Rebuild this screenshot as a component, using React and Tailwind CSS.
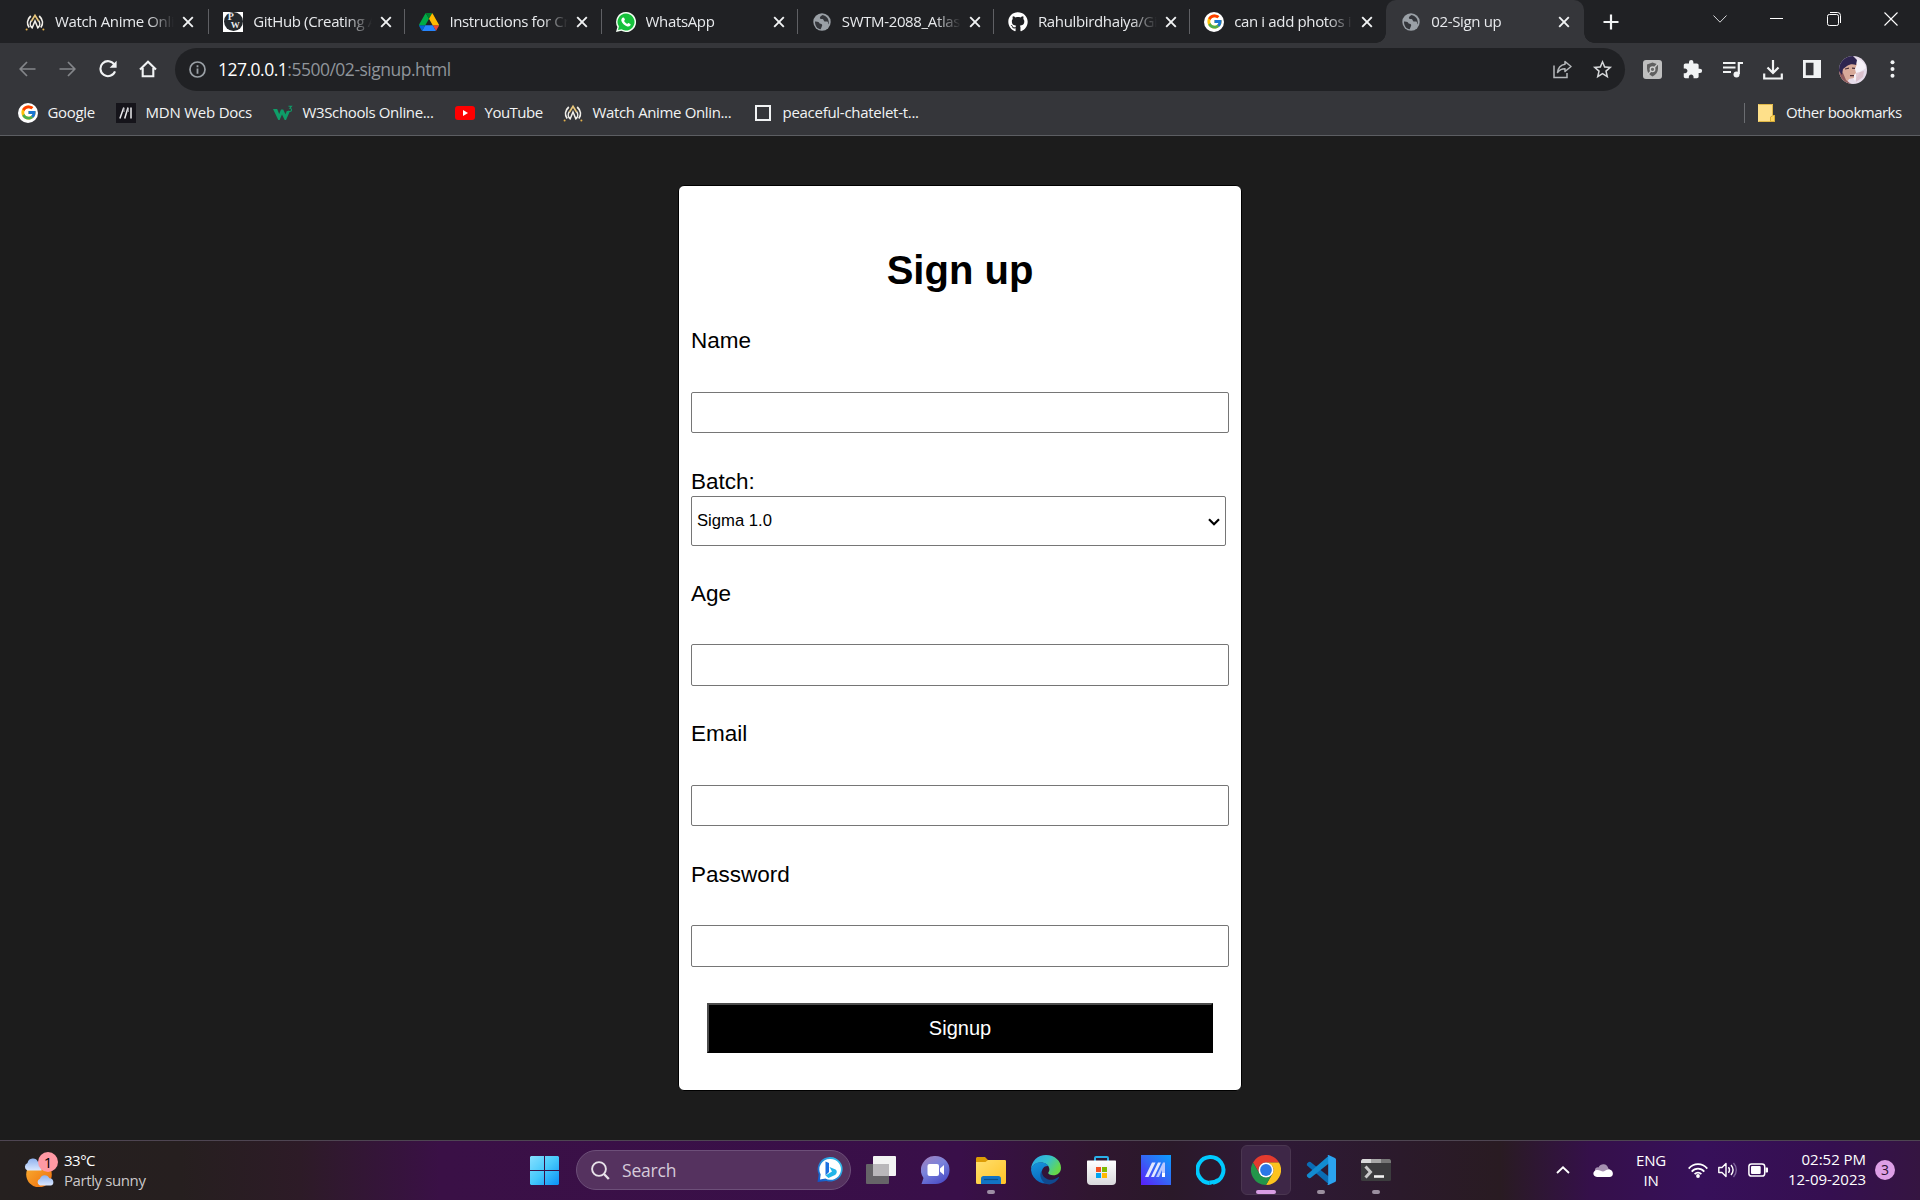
import React from "react";
import { FcGoogle } from "react-icons/fc";
import { FaGithub } from "react-icons/fa";
import { MdExtension, MdStarOutline } from "react-icons/md";

/* ---------- favicons ---------- */

function AnimeIcon() {
  return (
    <svg width="20" height="20" viewBox="0 0 20 20" fill="none">
      <path d="M4.200 15.500C1.600 12 2 7.500 5.800 4M15.800 15.500C18.400 12 18 7.500 14.200 4" stroke="#f1efe9" strokeWidth="1.700" />
      <path d="M6.500 8.500C4.500 11 5 14 7.200 15.800L10 9l2.800 6.800C15 14 15.500 11 13.500 8.500" stroke="#f1efe9" strokeWidth="1.500" />
      <path d="M6.500 9L10 3.300 13.500 9" stroke="#e8c77c" strokeWidth="1.700" />
      <circle cx="1.600" cy="17.600" r="1" fill="#e3b04b" />
      <circle cx="18.400" cy="17.600" r="1" fill="#e3b04b" />
    </svg>
  );
}

function PwIcon() {
  return (
    <span className="flex h-5 w-5 items-center justify-center bg-white">
      <span className="flex h-[19px] w-[19px] flex-col rounded-full bg-[#24292d] pt-px font-['Liberation_Serif',serif] font-bold text-[#e9ecec]">
        <span className="pl-[4px] text-[10px] leading-[8px]">P</span>
        <span className="pl-[7px] text-[9px] leading-[8px]">W</span>
      </span>
    </span>
  );
}

function DriveIcon() {
  return (
    <svg width="20" height="18" viewBox="0 0 87.300 78">
      <path fill="#0066da" d="m6.600 66.850 3.850 6.650c.8 1.400 1.950 2.500 3.300 3.300l13.750-23.800h-27.500c0 1.550.4 3.100 1.200 4.500z" />
      <path fill="#00ac47" d="m43.650 25-13.750-23.800c-1.350.8-2.500 1.900-3.300 3.300l-25.400 44a9.060 9.060 0 0 0 -1.200 4.500h27.500z" />
      <path fill="#ea4335" d="m73.550 76.800c1.350-.8 2.500-1.900 3.300-3.300l1.600-2.750 7.650-13.250c.8-1.400 1.200-2.950 1.200-4.500h-27.500l5.850 11.500z" />
      <path fill="#00832d" d="m43.650 25 13.750-23.800c-1.350-.8-2.900-1.200-4.500-1.200h-18.500c-1.600 0-3.150.45-4.500 1.200z" />
      <path fill="#2684fc" d="m59.800 53h-32.300l-13.750 23.800c1.350.8 2.900 1.200 4.500 1.200h50.800c1.600 0 3.150-.45 4.500-1.200z" />
      <path fill="#ffba00" d="m73.400 26.500-12.700-22c-.8-1.400-1.950-2.500-3.300-3.300l-13.750 23.800 16.150 28h27.450c0-1.550-.4-3.100-1.200-4.500z" />
    </svg>
  );
}

function WhatsIcon() {
  return (
    <svg width="20" height="20" viewBox="0 0 20 20">
      <path d="M10 0a10 10 0 1 1-4.700 18.800L0 20l1.400-5A10 10 0 0 1 10 0z" fill="#f4fff4" />
      <path d="M10 1.500a8.500 8.500 0 1 1-4.500 15.700L2 18l.9-3.400A8.500 8.500 0 0 1 10 1.500z" fill="#16c13c" />
      <path d="M7 5.500c.5-.3 1 0 1.200.5l.7 1.600c.1.500-.5 1-.8 1.400.8 1.500 1.900 2.400 3.200 3 .4-.4.8-1.100 1.200-1l1.800.9c.5.300.3 1 0 1.600-.6.900-1.900 1.200-3 .9-2.900-.8-5-2.900-5.900-5.400-.4-1.300.3-2.900 1.600-3.500z" fill="#fff" />
    </svg>
  );
}

function GlobeIcon() {
  return (
    <svg width="18" height="18" viewBox="0 0 18 18">
      <circle cx="9" cy="9" r="8.700" fill="#9aa0a6" />
      <path d="M2 8.500c2.800-.2 4.300.8 4.600 2 1.500.2 2.600.7 2.600 1.900l-1.500 3.900C4.500 16 1.800 13 2 8.500zM9.500 2c-1.500 1-3 2.200-2.600 3.300.4 1 1.700.6 2.700.8 1.200.3.8 1.700 1.900 2.300 1 .5 2.300-.4 3.100.3.700.7.200 2 1 2.800 1-4.500-1.500-8.800-6.100-9.500z" fill="#34363b" />
    </svg>
  );
}

function GoogleIcon() {
  return (
    <span className="flex h-5 w-5 items-center justify-center rounded-full bg-white">
      <FcGoogle size={17} />
    </span>
  );
}

function MdnIcon() {
  return (
    <svg width="20" height="20" viewBox="0 0 20 20" fill="none">
      <path fill="#15141a" d="M0 0h20v20H0z" />
      <path d="M4 15.500L7.500 5M8.200 15.500V5M8.500 15.500L12 5M12.300 15.500V5" stroke="none" />
      <path d="M3.900 15.500L7.800 4.500M8.700 15.500l3.300-11M15 15.500v-11" stroke="#e9e9ec" strokeWidth="1.500" />
      <path d="M8 5v4M12.300 5v4" stroke="#a9a9ae" strokeWidth="1" />
    </svg>
  );
}

function W3Icon() {
  return (
    <svg width="20" height="20" viewBox="0 0 20 20">
      <path d="M0 6h4.200l2 5L8 6.500h2.200l2.300 4.800 1.300-3.300h3.200L13 17h-1.300L9 11.500 6.600 17H5.300z" fill="#0f9d68" />
      <path d="M15.500 3.200h3l-1.600 2c2.300.2 2.200 3.300-.2 3.300-.7 0-1.200-.3-1.500-.7" fill="none" stroke="#0f9d68" strokeWidth="1.100" />
    </svg>
  );
}

function YoutubeIcon() {
  return (
    <svg width="20" height="14" viewBox="0 0 20 14">
      <rect width="20" height="14" rx="3" fill="#f00" />
      <path d="M8 4l5 3-5 3z" fill="#fff" />
    </svg>
  );
}

/* ---------- chrome ---------- */

function CloseX() {
  return (
    <svg width="12" height="12" viewBox="0 0 12 12" fill="none">
      <path d="M1.200 1.200l9.600 9.600M10.800 1.200L1.200 10.800" stroke="#f1f3f4" strokeWidth="1.900" />
    </svg>
  );
}

const tabs = [
  { icon: <AnimeIcon />, title: "Watch Anime Onli" },
  { icon: <PwIcon />, title: "GitHub (Creating A" },
  { icon: <DriveIcon />, title: "Instructions for Cr" },
  { icon: <WhatsIcon />, title: "WhatsApp" },
  { icon: <GlobeIcon />, title: "SWTM-2088_Atlas" },
  { icon: <FaGithub size={20} color="#fff" />, title: "Rahulbirdhaiya/Gi" },
  { icon: <GoogleIcon />, title: "can i add photos i" },
];

function TabTitle({ children }) {
  return (
    <span className="w-[119px] shrink-0 whitespace-nowrap text-[15px] tracking-[-0.35px] text-[#e8eaed] [mask-image:linear-gradient(to_right,black_78%,transparent_100%)]">
      {children}
    </span>
  );
}

function TabStrip() {
  return (
    <div className="flex h-[43px] bg-[#202124] pl-[13px]">
      {tabs.map((t, i) => (
        <div key={t.title} className={"flex w-[196.200px] shrink-0 items-center " + (i === 0 ? "pl-3" : "pl-[14px]")}>
          <span className="mr-[10px] flex w-5 shrink-0 justify-center">{t.icon}</span>
          <TabTitle>{t.title}</TabTitle>
          <span className="ml-[8px] flex w-3 shrink-0">
            <CloseX />
          </span>
          <span className={i === 6 ? "ml-auto w-px" : "ml-auto h-[25px] w-px bg-[#5f6064]"} />
        </div>
      ))}
      <div className="relative flex w-[198px] shrink-0 items-center rounded-t-[10px] bg-[#35363a] pl-[15px]">
        <span className="absolute -left-[10px] bottom-0 h-[10px] w-[10px] bg-[radial-gradient(circle_at_0_0,transparent_9.5px,#35363a_10px)]" />
        <span className="absolute -right-[10px] bottom-0 h-[10px] w-[10px] bg-[radial-gradient(circle_at_100%_0,transparent_9.5px,#35363a_10px)]" />
        <span className="mr-[10px] flex w-5 justify-center">
          <GlobeIcon />
        </span>
        <TabTitle>02-Sign up</TabTitle>
        <span className="ml-[8px]">
          <CloseX />
        </span>
      </div>
      <div className="flex w-[53px] items-center justify-center">
        <svg width="16" height="16" viewBox="0 0 16 16">
          <path d="M8 .5v15M.5 8h15" stroke="#f1f3f4" strokeWidth="2.200" />
        </svg>
      </div>
      <div className="mb-[6px] ml-auto flex w-[230px] items-center">
        <svg className="ml-[23px]" width="14" height="8" viewBox="0 0 14 8" fill="none">
          <path d="M.5.5L7 7.200 13.500.5" stroke="#d5d6d8" />
        </svg>
        <svg className="ml-[43px]" width="13" height="14" viewBox="0 0 13 14">
          <path d="M0 6.500h13" stroke="#fff" />
        </svg>
        <svg className="ml-11" width="14" height="14" viewBox="0 0 14 14" fill="none" stroke="#fff">
          <rect x=".5" y="2.500" width="11" height="11" rx="1.800" />
          <path d="M3 .5h7.500a3 3 0 0 1 3 3V11" />
        </svg>
        <svg className="ml-[43px]" width="14" height="14" viewBox="0 0 14 14">
          <path d="M.5.5l13 13M13.500.5l-13 13" stroke="#fff" strokeWidth="1.100" />
        </svg>
      </div>
    </div>
  );
}

function Avatar() {
  return (
    <svg width="28" height="28" viewBox="0 0 28 28">
      <defs>
        <clipPath id="avatar">
          <circle cx="14" cy="14" r="14" />
        </clipPath>
      </defs>
      <g clipPath="url(#avatar)">
        <path fill="#e6dcea" d="M0 0h28v28H0z" />
        <path fill="#f6f1f8" d="M17 3c5 0 9 4 10 9l-6 4-5 9-3-4z" />
        <path fill="#d0a6b0" d="M17 17l8-2-1 6-7 5z" opacity=".5" />
        <path fill="#d8aa9a" d="M1 11c4-5 12-6 17-3l-2 5 1 4-2 2v3l-5 1-3 5-6-6z" />
        <path fill="#8e5a5c" d="M0 14l4 3 3 7 5 4H4l-4-7z" />
        <path fill="#2f2550" d="M0 0h14l4 4-1 5c-3-1-6-1-9 1l-4 3-1 6-3-4z" />
        <path fill="#4a2f38" d="M6 12.500l4-1v1.300l-4 .8zM13 11.500l3 .3v1.200l-3-.3zM11 19h4v1.200h-4z" />
      </g>
    </svg>
  );
}

function Toolbar() {
  return (
    <div className="flex h-[50px] items-center bg-[#35363a] pt-[3px]">
      <svg className="mb-px ml-[19px]" width="17" height="16" viewBox="0 0 17 16" fill="none" stroke="#84868a" strokeWidth="1.700">
        <path d="M16.500 8H1.500M8 1L1.200 8 8 15" />
      </svg>
      <svg className="mb-px ml-[23px]" width="17" height="16" viewBox="0 0 17 16" fill="none" stroke="#84868a" strokeWidth="1.700">
        <path d="M.5 8h15M9 1l6.800 7L9 15" />
      </svg>
      <svg className="mb-px ml-[23px]" width="18" height="18" viewBox="0 0 18 18" fill="none">
        <path d="M15.400 4.800A7.500 7.500 0 1 0 16 11.300" stroke="#f1f3f4" strokeWidth="2.100" />
        <path d="M17.600.8v7h-7z" fill="#f1f3f4" />
      </svg>
      <svg className="mb-px ml-[22px]" width="18" height="18" viewBox="0 0 18 18" fill="none" stroke="#f1f3f4" strokeWidth="2.100">
        <path d="M1 9.500L9 1.800l8 7.700M3.700 8v8.200h10.600V8" />
      </svg>
      <div className="ml-[18px] flex h-[43px] w-[1450px] items-center rounded-full bg-[#202124]">
        <svg className="ml-[14px]" width="17" height="17" viewBox="0 0 17 17">
          <circle cx="8.500" cy="8.500" r="7.500" fill="none" stroke="#9aa0a6" strokeWidth="1.700" />
          <path d="M8.500 4.200v2M8.500 7.500v5.300" stroke="#9aa0a6" strokeWidth="1.800" />
        </svg>
        <span className="ml-[12px] text-[17.500px] tracking-[-0.5px] text-[#8f949a]">
          <span className="text-white">127.0.0.1</span>:5500/02-signup.html
        </span>
        <svg className="ml-auto" width="19" height="19" viewBox="0 0 19 19" fill="none" stroke="#b5b8bb" strokeWidth="1.500">
          <path d="M1 5.500v12h13v-4.500" />
          <path d="M12 1.500l6 5-6 5V8.800c-3.300 0-5.500 1-7.500 3.700.3-4 3-7.800 7.500-8.200z" strokeLinejoin="round" />
        </svg>
        <MdStarOutline className="ml-[19px] mr-[11px]" size={23} color="#d6d8da" />
      </div>
      <svg className="mb-px ml-[18px]" width="19" height="19" viewBox="0 0 19 19">
        <rect width="19" height="19" rx="3" fill="#bfbfbf" />
        <path d="M9.500 2.500L15 4.500v4c0 3.800-2.200 6.300-5.500 8-3.300-1.700-5.500-4.200-5.500-8v-4z" fill="#5f5f5f" />
        <path d="M15.500 3L11 8M8 11l-3.500 4" stroke="#c9c9c9" strokeWidth="1.300" />
        <circle cx="9.500" cy="9.300" r="2.300" fill="#6a6a6a" stroke="#cfcfcf" strokeWidth="1.300" />
      </svg>
      <MdExtension className="mb-px ml-[20px]" size={21} color="#f1f3f4" />
      <svg className="mb-px ml-[20px]" width="20" height="17" viewBox="0 0 20 17" fill="none" stroke="#f1f3f4">
        <path d="M0 2h12.500M0 6.500h12.500M0 11h8" strokeWidth="2" />
        <path d="M15.800 13V2H20" strokeWidth="2.200" />
        <circle cx="13.500" cy="13.500" r="3" fill="#f1f3f4" stroke="none" />
      </svg>
      <svg className="ml-[20px]" width="20" height="20" viewBox="0 0 20 20" fill="none" stroke="#f1f3f4" strokeWidth="2.200">
        <path d="M10 0v12M4.500 7.500L10 13l5.500-5.500M1.200 13.500v5h17.600v-5" />
      </svg>
      <svg className="mb-px ml-[20px]" width="18" height="18" viewBox="0 0 18 18">
        <path d="M0 0h18v18H0zM2.800 2.800v12.400h7.700V2.800z" fill="#f1f3f4" fillRule="evenodd" />
      </svg>
      <span className="ml-[18px]">
        <Avatar />
      </span>
      <svg className="mb-px ml-[23px]" width="5" height="18" viewBox="0 0 5 18" fill="#f1f3f4">
        <circle cx="2.500" cy="2.300" r="2" />
        <circle cx="2.500" cy="9" r="2" />
        <circle cx="2.500" cy="15.700" r="2" />
      </svg>
    </div>
  );
}

const bookmarks = [
  { icon: <GoogleIcon />, label: "Google", box: "w-[98px] tracking-[-0.35px]" },
  { icon: <MdnIcon />, label: "MDN Web Docs", box: "w-[157px] tracking-[-0.22px]" },
  { icon: <W3Icon />, label: "W3Schools Online...", box: "w-[182px] tracking-[-0.36px]" },
  { icon: <YoutubeIcon />, label: "YouTube", box: "w-[108px] tracking-[-0.5px]" },
  { icon: <AnimeIcon />, label: "Watch Anime Onlin...", box: "w-[190px] tracking-[-0.36px]" },
  { icon: <span className="h-4 w-4 border-2 border-[#f1f3f4]" />, label: "peaceful-chatelet-t...", box: "w-[180px] tracking-[-0.28px]" },
];

function Bookmarks() {
  return (
    <div className="flex h-[43px] items-center border-b border-[#5c5e62] bg-[#35363a] pb-[3px] pl-[18px] text-[15px] text-[#f1f3f4]">
      {bookmarks.map((b) => (
        <div key={b.label} className={"flex shrink-0 items-center whitespace-nowrap " + b.box}>
          <span className="mr-[9.500px] flex w-5 shrink-0 justify-center">{b.icon}</span>
          {b.label}
        </div>
      ))}
      <div className="ml-auto flex w-[176px] items-center whitespace-nowrap tracking-[-0.5px]">
        <span className="h-5 w-px bg-[#6b6d71]" />
        <svg className="ml-[13px] mr-[11px]" width="17" height="18" viewBox="0 0 17 18">
          <path d="M0 0h15v11h1.500v7H0z" fill="#fee08a" />
          <path d="M.5.5h14V11M.5 17.500h15.500" fill="none" stroke="#e0b848" />
          <path d="M12.500 17.500V13l2.500-1.500h1.500v6z" fill="#ffd65c" stroke="#d9ad35" />
        </svg>
        Other bookmarks
      </div>
    </div>
  );
}

/* ---------- page ---------- */

function Field({ label, gap, size }) {
  return (
    <>
      <label className={"leading-[26px] " + gap}>{label}</label>
      <input className={"block w-[538px] rounded-[2px] border border-[#767676] bg-white " + size} />
    </>
  );
}

function SignupPage() {
  return (
    <main className="flex h-[1004px] justify-center bg-[#1c1c1c] pt-[49px] font-['Liberation_Sans',Arial,sans-serif] text-[22.500px] text-black">
      <form className="flex h-[906px] w-[564px] flex-col rounded-[6px] border border-black bg-white pl-3 pt-[61px]">
        <h1 className="-ml-3 text-center text-[40px] font-bold leading-[46px]">Sign up</h1>
        <Field label="Name" gap="mt-[35px]" size="mt-[38px] h-[41px]" />
        <label className="mt-9 leading-[26px]">Batch:</label>
        <div className="mt-px flex h-[50px] w-[535px] items-center justify-between rounded-[2px] border border-[#767676] pl-[5px] pr-[5px] text-[16.670px]">
          <span className="pb-px">Sigma 1.0</span>
          <svg className="mt-px" width="12" height="8" viewBox="0 0 12 8" fill="none">
            <path d="M1 1.200l5 5 5-5" stroke="#000" strokeWidth="2.200" />
          </svg>
        </div>
        <Field label="Age" gap="mt-[35px]" size="mt-[37px] h-[42px]" />
        <Field label="Email" gap="mt-[35px]" size="mt-[38px] h-[41px]" />
        <Field label="Password" gap="mt-[36px]" size="mt-[37px] h-[42px]" />
        <button
          type="button"
          className="ml-4 mt-9 h-[50px] w-[506px] border-2 border-b-black border-l-[#4c4c4c] border-r-black border-t-[#4c4c4c] bg-black text-[20px] leading-none text-white"
        >
          Signup
        </button>
      </form>
    </main>
  );
}

/* ---------- taskbar ---------- */

function WeatherIcon() {
  return (
    <span className="relative -mt-px h-[34px] w-[34px]">
      <svg width="34" height="34" viewBox="0 0 34 34">
        <defs>
          <linearGradient id="sun" x1="0" y1="0" x2="1" y2="1">
            <stop offset="0" stopColor="#f9b233" />
            <stop offset="1" stopColor="#ef6c0c" />
          </linearGradient>
          <linearGradient id="cloud" x1="0" y1="0" x2="0" y2="1">
            <stop offset="0" stopColor="#8fb2ee" />
            <stop offset="1" stopColor="#dbe8ff" />
          </linearGradient>
        </defs>
        <circle cx="15" cy="21.500" r="12.800" fill="url(#sun)" />
        <path d="M3.500 17.500a4 4 0 0 1 0-7.500 5.500 5.500 0 0 1 10.500-1 4 4 0 0 1 3.500 4v4.500z" fill="url(#cloud)" />
        <path d="M16 32.500a3.600 3.600 0 0 1 0-6.800 5 5 0 0 1 9.300-.5 3.800 3.800 0 0 1 1.700 7.300z" fill="url(#cloud)" />
      </svg>
      <span className="absolute -top-px left-[14px] h-5 w-5 rounded-full bg-[#ff99a4] text-center text-[15px] leading-[20px] text-black">1</span>
    </span>
  );
}

function WindowsIcon() {
  return (
    <svg width="29" height="29" viewBox="0 0 29 29">
      <defs>
        <linearGradient id="win" x1="0" y1="0" x2="1" y2="1">
          <stop offset="0" stopColor="#86e0ff" />
          <stop offset=".5" stopColor="#45c8fb" />
          <stop offset="1" stopColor="#0a90f5" />
        </linearGradient>
      </defs>
      <path d="M1 0h13v14H0V1zM15 0h13l1 1v13H15zM0 15h14v14H1l-1-1zM15 15h14v13l-1 1H15z" fill="url(#win)" />
    </svg>
  );
}

function BingIcon() {
  return (
    <svg width="26" height="26" viewBox="0 0 26 26">
      <defs>
        <linearGradient id="bing" x1="1" y1="0" x2="0" y2="1">
          <stop offset="0" stopColor="#38d0f0" />
          <stop offset="1" stopColor="#124fc4" />
        </linearGradient>
      </defs>
      <path d="M13.500 0a12.300 12.300 0 1 1-4 24L.5 25l1.200-7.500A12.400 12.400 0 0 1 13.500 0z" fill="url(#bing)" />
      <path d="M13.500 2a10.400 10.400 0 1 1-5 19.500L3 22.500l.7-5A10.500 10.500 0 0 1 13.500 2z" fill="#fff" />
      <path d="M8.500 4.500L12 6v9l-3.500 3.500z" fill="#1c6fe0" />
      <path d="M12.500 10l6 2.500c2 1 1.500 4.500-.5 5.500L11.500 21l-3-2.500 6.500-4z" fill="#22b5e8" />
    </svg>
  );
}

function TaskViewIcon() {
  return (
    <svg width="30" height="28" viewBox="0 0 30 28">
      <rect y="8" width="23" height="20" rx="1" fill="#666468" />
      <rect x="7" width="23" height="20" rx="1" fill="#f3f3f3" />
      <path d="M7 8h16v12H7z" fill="#b9b7ba" />
    </svg>
  );
}

function ChatIcon() {
  return (
    <svg width="29" height="28" viewBox="0 0 29 28">
      <defs>
        <linearGradient id="chat" x1="0" y1="0" x2=".6" y2="1">
          <stop offset="0" stopColor="#a57fb9" />
          <stop offset=".5" stopColor="#7a83dc" />
          <stop offset="1" stopColor="#4f52c8" />
        </linearGradient>
      </defs>
      <path d="M14.500 0a14 14 0 1 1 0 28H.5l2-6A14 14 0 0 1 14.500 0z" fill="url(#chat)" />
      <rect x="6.500" y="8" width="11.500" height="12" rx="2" fill="#fff" />
      <path d="M19 12.500L23 9v10l-4-3.500z" fill="#fff" />
    </svg>
  );
}

function ExplorerIcon() {
  return (
    <svg width="30" height="27" viewBox="0 0 30 27">
      <defs>
        <linearGradient id="fold" x1="0" y1="0" x2="1" y2="1">
          <stop offset="0" stopColor="#ffdf6e" />
          <stop offset="1" stopColor="#ffc326" />
        </linearGradient>
      </defs>
      <path d="M0 1.500C0 .7.700 0 1.500 0H9l3 3h16.500c.8 0 1.500.7 1.500 1.500V12H0z" fill="#dd9c05" />
      <path d="M0 5h9.500L12 3h16.500c.8 0 1.500.7 1.500 1.500v21c0 .8-.7 1.500-1.500 1.500h-27A1.500 1.500 0 0 1 0 25.500z" fill="url(#fold)" />
      <path d="M5 27v-5.500c0-1.400 1-2.500 2.500-2.500h15c1.400 0 2.500 1 2.500 2.500V27z" fill="#1273c4" />
      <path d="M8 22.500h14" stroke="#0b4f8a" strokeWidth="1.200" />
    </svg>
  );
}

function EdgeIcon() {
  return (
    <svg width="30" height="30" viewBox="0 0 30 30">
      <defs>
        <linearGradient id="e1" x1="0" y1="0" x2="1" y2=".5">
          <stop offset="0" stopColor="#2aa5e8" />
          <stop offset=".55" stopColor="#35c1cf" />
          <stop offset="1" stopColor="#66d84a" />
        </linearGradient>
        <linearGradient id="e2" x1="0" y1="0" x2=".4" y2="1">
          <stop offset="0" stopColor="#1695dd" />
          <stop offset="1" stopColor="#0a68bd" />
        </linearGradient>
      </defs>
      <path d="M0 14.500C.3 6 6.800 0 15 0c9 0 15 6.200 15 12.700 0 4.600-3.400 7.600-7.800 7.600-3 0-5-1.100-5-2.300 0-.8 1.200-1.300 1.200-3.500C18.400 10 14 7.500 9.500 7.500 4.600 7.500 1 10.800 0 14.500z" fill="url(#e1)" />
      <path d="M0 15C.5 10.500 4.600 7.300 9.500 7.300c3.500 0 6.500 1.500 8 4-3.500-1-6.700 2-6.700 6.500 0 6.500 6 10.500 12 8.500A15 15 0 0 1 0 15z" fill="url(#e2)" />
      <path d="M11 15.500c-1 6.500 6 10.500 11.500 9 2-.5 3.700-1.700 4.800-2.500.5-.3 1 .2.700.8A15 15 0 0 1 18.500 29.600C10.500 29 7 19.500 11 15.500z" fill="#10498f" />
    </svg>
  );
}

function StoreIcon() {
  return (
    <svg width="29" height="29" viewBox="0 0 29 29">
      <defs>
        <linearGradient id="bag" x1="0" y1="0" x2="0" y2="1">
          <stop offset="0" stopColor="#fff" />
          <stop offset="1" stopColor="#d9d9dc" />
        </linearGradient>
      </defs>
      <path d="M8 6V2c0-.6.400-1 1-1h11c.6 0 1 .4 1 1v4" fill="none" stroke="#2ab0e8" strokeWidth="2" />
      <path d="M0 5.500c0-.6.400-1 1-1h27c.6 0 1 .4 1 1V25a4 4 0 0 1-4 4H4a4 4 0 0 1-4-4z" fill="url(#bag)" />
      <path fill="#f25022" d="M9 11h5v5H9z" />
      <path fill="#7fba00" d="M15 11h5v5h-5z" />
      <path fill="#00a4ef" d="M9 17h5v5H9z" />
      <path fill="#ffb900" d="M15 17h5v5h-5z" />
    </svg>
  );
}

function AsusIcon() {
  return (
    <svg width="30" height="30" viewBox="0 0 30 30">
      <defs>
        <linearGradient id="asus" x1="1" y1="0" x2="0" y2="1">
          <stop offset="0" stopColor="#0a9dff" />
          <stop offset=".5" stopColor="#3566f5" />
          <stop offset="1" stopColor="#5a1dfb" />
        </linearGradient>
      </defs>
      <path fill="url(#asus)" d="M0 0h30v30H0z" />
      <path d="M4 22L11 7.500h3.500L7.500 22zM10 22l7-14.500h3L13 22z" fill="#e3e8ff" />
      <path d="M15 22l7-14.500h2V22h-3v-7l-3 7z" fill="#b9c8ff" />
      <path d="M21 18h3v4h-3z" fill="#fff" />
    </svg>
  );
}

function AlexaIcon() {
  return (
    <svg width="30" height="30" viewBox="0 0 30 30" fill="none">
      <path d="M13.200 28A13 13 0 1 1 17 27.800" stroke="#00caff" strokeWidth="4" />
      <path d="M13.200 30v-4.500c3 .2 6-.6 8.500-2.500-1 4-4.500 6.700-8.500 7z" fill="#00caff" />
    </svg>
  );
}

function ChromeIcon() {
  return (
    <svg width="30" height="30" viewBox="0 0 30 30">
      <path d="M2 7.500A15 15 0 0 1 28 7.500H15A7.500 7.500 0 0 0 8.500 18.700z" fill="#e33b2e" />
      <path d="M28 7.500A15 15 0 0 1 15 30l6.500-11.300A7.500 7.500 0 0 0 15 7.500z" fill="#fcc31e" />
      <path d="M15 30A15 15 0 0 1 2 7.500l6.500 11.200a7.500 7.500 0 0 0 13 0z" fill="#23964a" />
      <circle cx="15" cy="15" r="7.500" fill="#fff" />
      <circle cx="15" cy="15" r="5.900" fill="#2b77e8" />
    </svg>
  );
}

function CodeIcon() {
  return (
    <svg width="30" height="30" viewBox="0 0 30 30">
      <path d="M1 8.500l2-1.700 1.500.1L24 22.500l-1 7L.8 10.300z" fill="#0a6cb5" />
      <path d="M1 21.500l2 1.700 1.500-.1L24 7.500l-1-7L.8 19.700z" fill="#128bd0" />
      <path d="M22.500 0L29 3c.6.300 1 .9 1 1.600v20.800c0 .7-.4 1.300-1 1.600L22.500 30c-.8 0-1.200-.3-1.500-.7.700.3 1.200-.3 1.200-1V1.700c0-.7-.5-1.300-1.200-1 .4-.5.800-.7 1.500-.7z" fill="#2ba3ef" />
    </svg>
  );
}

function TerminalIcon() {
  return (
    <svg width="30" height="22" viewBox="0 0 30 22">
      <rect width="30" height="22" rx="1.500" fill="#3c3c3e" />
      <path d="M1.500 0H10v4H0V1.500z" fill="#d9d9d9" />
      <path d="M10 0h10v4H10z" fill="#a7a7a7" />
      <path d="M20 0h8.500L30 1.500V4H20z" fill="#777" />
      <path d="M4.500 7.500L9.500 13l-5 5.500" fill="none" stroke="#c9c9c9" strokeWidth="3" />
      <path d="M13 17.500h10" stroke="#f2f2f2" strokeWidth="2.600" />
    </svg>
  );
}

const apps = [
  { id: "explorer", icon: <ExplorerIcon />, mark: "w-2 bg-[#9d8ea5]" },
  { id: "edge", icon: <EdgeIcon /> },
  { id: "store", icon: <StoreIcon /> },
  { id: "asus", icon: <AsusIcon /> },
  { id: "alexa", icon: <AlexaIcon /> },
  { id: "chrome", icon: <ChromeIcon />, mark: "w-5 bg-[#d99de4]", active: true },
  { id: "code", icon: <CodeIcon />, mark: "w-2 bg-[#9b8f9f]" },
  { id: "terminal", icon: <TerminalIcon />, mark: "w-2 bg-[#9b8f9f]" },
];

function Taskbar() {
  return (
    <footer className="flex h-[60px] items-center border-t border-[#4e4552] bg-[linear-gradient(90deg,#25201f_0,#261f1f_180px,#2d1b27_300px,#3a1046_440px,#390f49_960px,#301630_1090px,#2a1929_1170px,#2f1937_1270px,#2b1a2b_1400px,#291b22_1500px,#35104a_1590px,#37105a_1700px,#350f50_1830px,#351541_1920px)] pb-px text-[15px] text-white">
      <div className="flex w-[530px] items-center pl-[24px]">
        <WeatherIcon />
        <div className="-mt-px ml-[6px] leading-5">
          <div className="tracking-[-0.5px]">33°C</div>
          <div className="tracking-[-0.4px] text-[#cbc8c9]">Partly sunny</div>
        </div>
      </div>
      <WindowsIcon />
      <div className="ml-[17px] flex h-10 w-[275px] items-center rounded-full border border-[#6d4f79] bg-[#55325f] pl-[14px] pr-[7px]">
        <svg width="19" height="19" viewBox="0 0 19 19" fill="none" stroke="#e8e2ea">
          <circle cx="8" cy="8" r="6.900" strokeWidth="1.900" />
          <path d="M13 13l4.800 5" strokeWidth="2.400" />
        </svg>
        <span className="ml-3 pt-px text-[17.500px] tracking-[-0.2px] text-[#d6cbda]">Search</span>
        <span className="ml-auto">
          <BingIcon />
        </span>
      </div>
      <div className="ml-[15px]">
        <TaskViewIcon />
      </div>
      <div className="ml-[25px] mr-[16px]">
        <ChatIcon />
      </div>
      <div className="flex gap-[5px]">
        {apps.map((a) => (
          <div
            key={a.id}
            className={
              "relative flex h-[50px] w-[50px] items-center justify-center rounded-md border " +
              (a.active ? "border-[#4a3650] bg-[#3e2747]" : "border-transparent")
            }
          >
            {a.icon}
            {a.mark && <span className={"absolute bottom-0 h-1 rounded-full " + a.mark} />}
          </div>
        ))}
      </div>
      <div className="ml-auto flex w-[364px] items-center">
        <svg width="14" height="8" viewBox="0 0 14 8" fill="none">
          <path d="M1 7l6-5.700L13 7" stroke="#fff" strokeWidth="1.900" />
        </svg>
        <svg className="ml-[23px]" width="20" height="13" viewBox="0 0 20 13">
          <path d="M2 6c0-2 2-3 3.500-2.500C6.500 1 9 0 11 .3c3 .3 4 2.700 4.300 4.200L17 5.500 10 10H2z" fill="#a590b0" />
          <path d="M4 13C-.5 13-1 7 3.500 6c3-.5 5 1.500 6.500 1.500S13.500 5 16.500 5.500C21 6.500 21 13 16.500 13z" fill="#fff" />
        </svg>
        <div className="ml-[22px] w-8 pb-px text-center leading-5 tracking-[-0.2px]">
          ENG
          <br />
          IN
        </div>
        <svg className="ml-[21px]" width="20" height="15" viewBox="0 0 20 15" fill="none" stroke="#fff" strokeWidth="1.700">
          <path d="M.7 5.600c5-5.900 13.600-5.900 18.600 0M3.700 8.600c3.500-4 9.100-4 12.600 0M6.600 11.200c2-2 4.800-2 6.800 0" />
          <circle cx="10" cy="13" r="1.900" fill="#fff" stroke="none" />
        </svg>
        <svg className="ml-[10px]" width="20" height="16" viewBox="0 0 20 16" fill="none" stroke="#fff" strokeWidth="1.400">
          <path d="M.8 5.500H4l4-4v13l-4-4H.8z" strokeLinejoin="round" />
          <path d="M10.500 5.200c1.200 1.700 1.200 3.900 0 5.600M13 3c2.500 3 2.500 7 0 10" />
          <path d="M15.500 1c3.700 4 3.700 10 0 14" stroke="#7d629a" />
        </svg>
        <svg className="ml-[10px]" width="20" height="14" viewBox="0 0 20 14">
          <rect x=".9" y=".9" width="15.800" height="12.200" rx="2.600" fill="none" stroke="#fff" strokeWidth="1.500" />
          <rect x="3" y="3" width="9.700" height="8" rx="1" fill="#fff" />
          <path d="M17.500 4.500H19c.6 0 1 .4 1 1v3c0 .6-.4 1-1 1h-1.500z" fill="#fff" />
        </svg>
        <div className="ml-auto pb-[3px] text-right leading-5 tracking-[-0.03px]">
          02:52 PM
          <br />
          12-09-2023
        </div>
        <span className="ml-[9px] mr-[25px] h-5 w-5 rounded-full bg-[#dd9fe6] text-center text-[14px] leading-[19px] text-[#2c1233]">3</span>
      </div>
    </footer>
  );
}

export default function App() {
  return (
    <div className="h-[1200px] w-[1920px] overflow-hidden bg-[#1c1c1c] font-['Open_Sans','Noto_Sans',sans-serif]">
      <TabStrip />
      <Toolbar />
      <Bookmarks />
      <SignupPage />
      <Taskbar />
    </div>
  );
}
